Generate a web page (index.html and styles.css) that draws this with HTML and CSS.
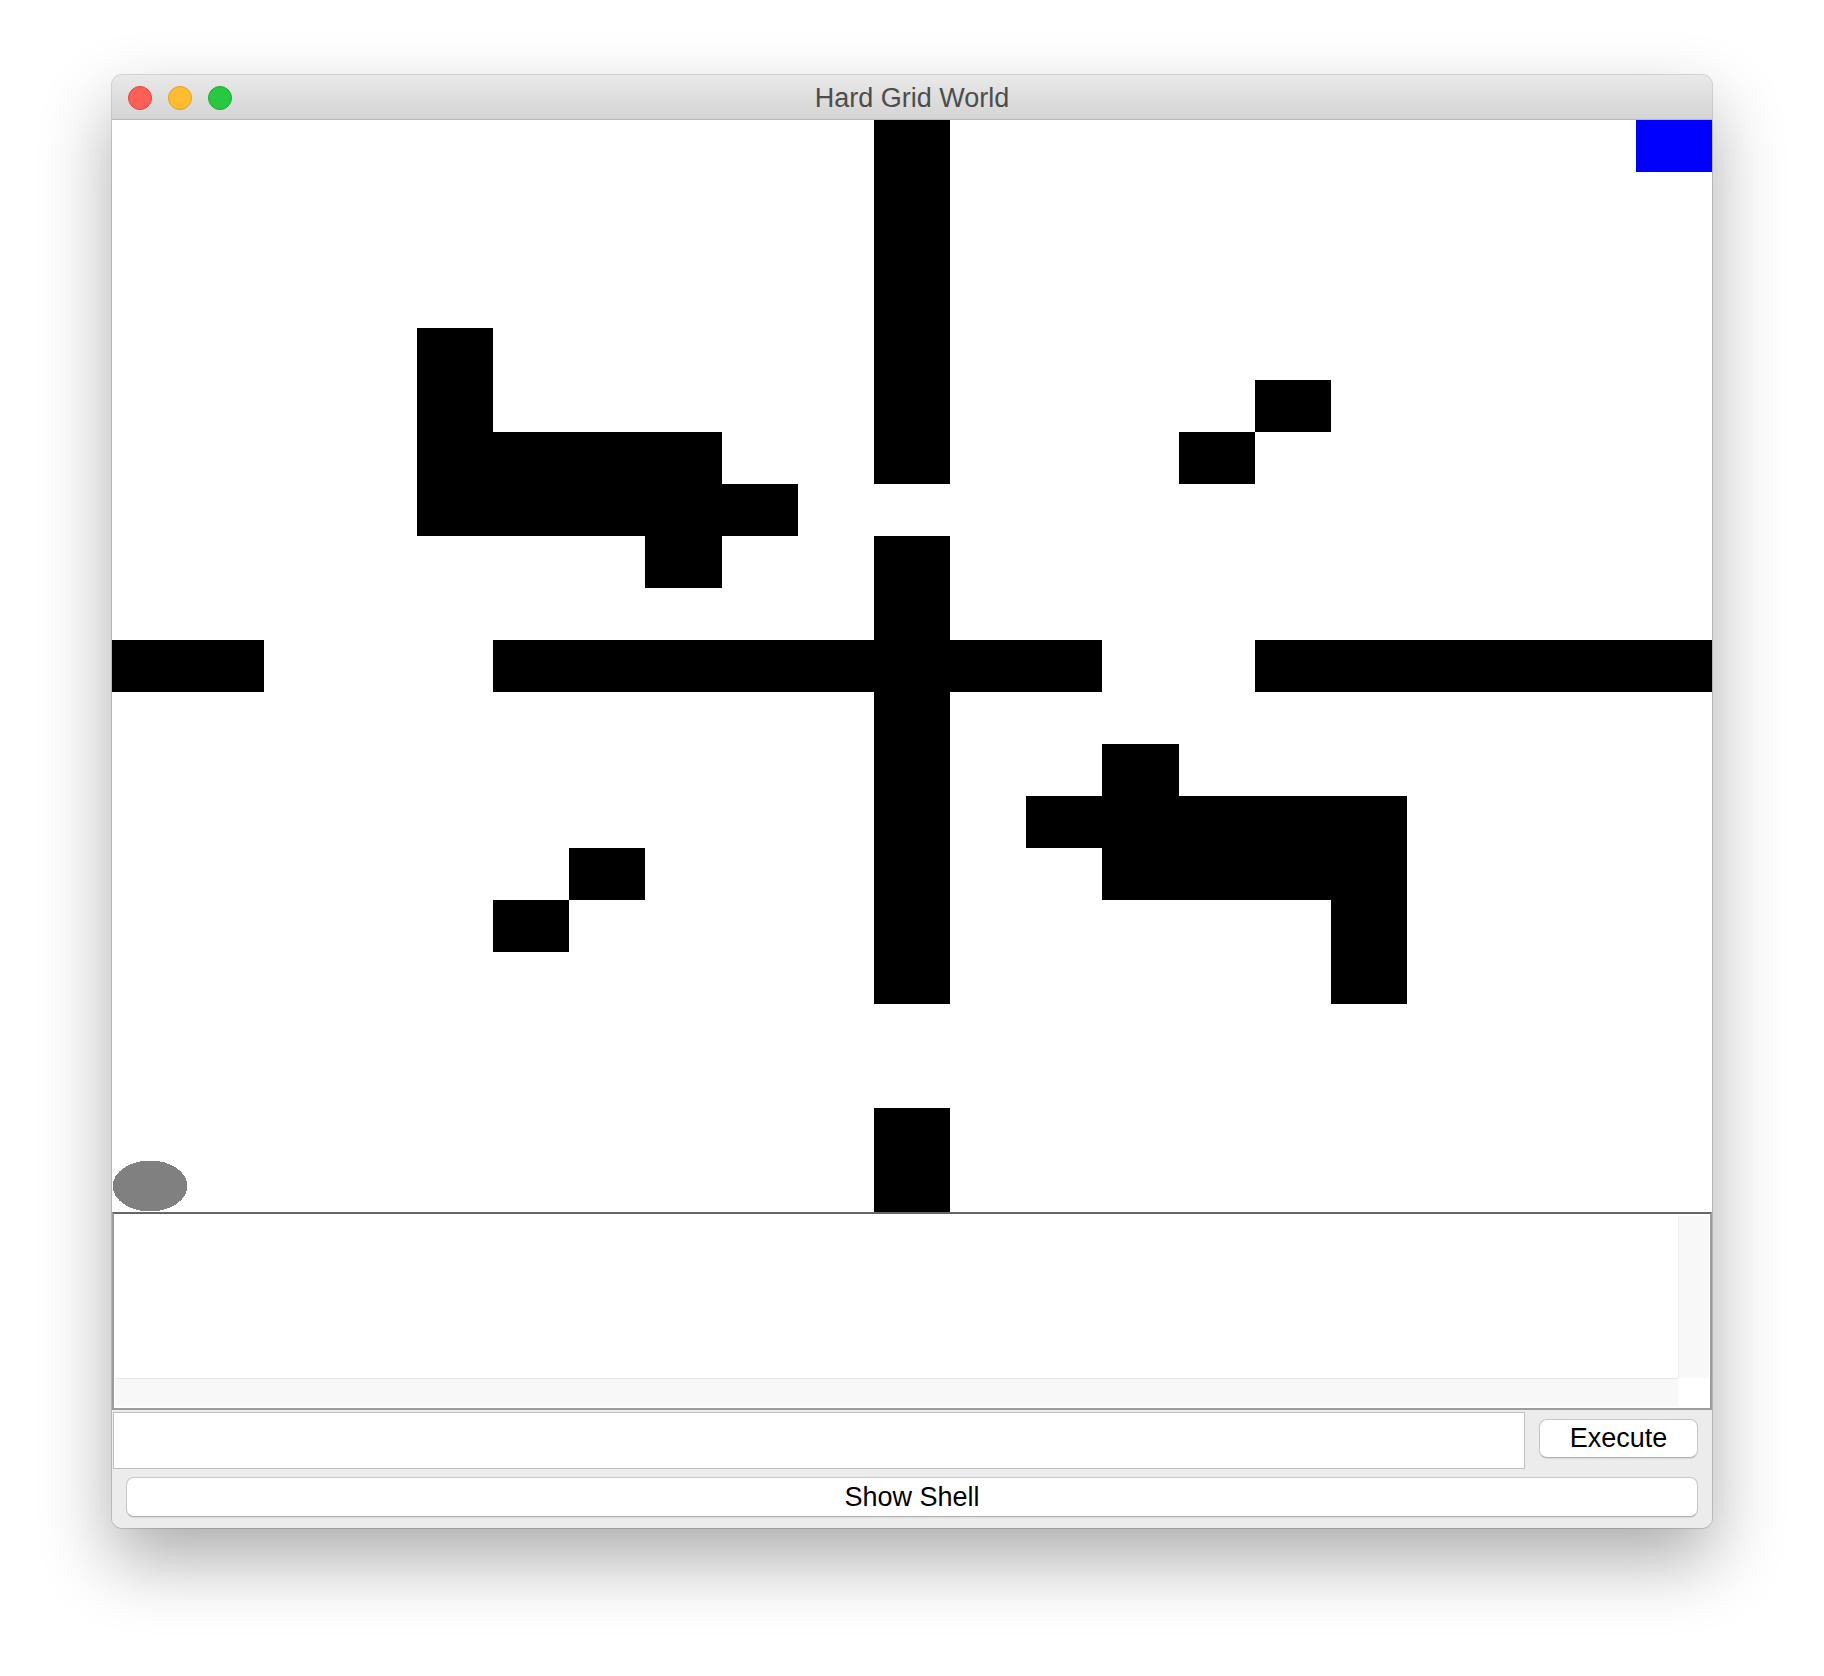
FILE: index.html
```html
<!DOCTYPE html>
<html lang="en">
<head>
<meta charset="utf-8">
<title>Hard Grid World</title>
<link rel="stylesheet" href="styles.css">
</head>
<body>
<div class="window">
  <div class="titlebar">
    <div class="lights">
      <span class="light red"></span>
      <span class="light yellow"></span>
      <span class="light green"></span>
    </div>
    <div class="title">Hard Grid World</div>
  </div>
  <svg class="grid" viewBox="0 0 21 21" preserveAspectRatio="none" shape-rendering="crispEdges">
    <g fill="#000">
      <rect x="10" y="0" width="1" height="7"/>
      <rect x="10" y="8" width="1" height="9"/>
      <rect x="10" y="19" width="1" height="2"/>
      <rect x="0" y="10" width="2" height="1"/>
      <rect x="5" y="10" width="8" height="1"/>
      <rect x="15" y="10" width="6" height="1"/>
      <rect x="4" y="4" width="1" height="4"/>
      <rect x="5" y="6" width="3" height="2"/>
      <rect x="8" y="7" width="1" height="1"/>
      <rect x="7" y="8" width="1" height="1"/>
      <rect x="15" y="5" width="1" height="1"/>
      <rect x="14" y="6" width="1" height="1"/>
      <rect x="6" y="14" width="1" height="1"/>
      <rect x="5" y="15" width="1" height="1"/>
      <rect x="13" y="12" width="1" height="1"/>
      <rect x="12" y="13" width="5" height="1"/>
      <rect x="13" y="14" width="4" height="1"/>
      <rect x="16" y="15" width="1" height="2"/>
    </g>
    <rect x="20" y="0" width="1" height="1" fill="#0000ff"/>
    <ellipse cx="0.5" cy="20.5" rx="0.49" ry="0.49" fill="#808080"/>
  </svg>
  <div class="scrollpane">
    <div class="viewport"></div>
    <div class="vtrack"></div>
    <div class="htrack"></div>
    <div class="corner"></div>
  </div>
  <div class="controls">
    <div class="cmdrow">
      <div class="field"></div>
      <button class="btn exec">Execute</button>
    </div>
    <button class="btn shell">Show Shell</button>
  </div>
</div>
</body>
</html>
```

FILE: styles.css
```css
html, body {
  margin: 0;
  padding: 0;
  background: #ffffff;
}

body {
  width: 1824px;
  height: 1676px;
  padding: 75px 112px 0;
  box-sizing: border-box;
  font-family: "Liberation Sans", Arial, sans-serif;
}

.window {
  width: 1600px;
  height: 1453px;
  display: flex;
  flex-direction: column;
  background: #ececec;
  border-radius: 10px;
  overflow: hidden;
  box-shadow: 0 32px 72px rgba(0, 0, 0, 0.33), 0 0 0 1px rgba(0, 0, 0, 0.14);
}

.titlebar {
  height: 44px;
  flex: none;
  display: flex;
  align-items: center;
  position: relative;
  background: linear-gradient(#e9e9e9, #d4d4d4);
  border-bottom: 1px solid #b9b9b9;
}

.lights {
  display: flex;
  gap: 16px;
  padding-left: 16px;
  padding-top: 1px;
}

.light {
  width: 24px;
  height: 24px;
  border-radius: 50%;
  box-sizing: border-box;
  display: block;
}

.red { background: #fe5f57; border: 1px solid #e0443e; }
.yellow { background: #febc2e; border: 1px solid #dea123; }
.green { background: #28c840; border: 1px solid #1aab29; }

.title {
  position: absolute;
  left: 0;
  right: 0;
  top: 2px;
  bottom: 0;
  display: flex;
  align-items: center;
  justify-content: center;
  font-size: 27px;
  color: #4d4d4d;
}

.grid {
  display: block;
  width: 1600px;
  height: 1092px;
  flex: none;
  background: #ffffff;
}

.scrollpane {
  flex: none;
  height: 198px;
  box-sizing: border-box;
  border: 2px solid #9c9c9c;
  border-top-color: #666666;
  padding: 2px;
  background: #ffffff;
  display: grid;
  grid-template-columns: 1fr 30px;
  grid-template-rows: 162px 28px;
}

.viewport { background: #ffffff; }

.vtrack {
  background: #f8f8f8;
  border-left: 1px solid #ececec;
}

.htrack {
  background: #f8f8f8;
  border-top: 1px solid #e8e8e8;
}

.corner { background: #ffffff; }

.controls {
  flex: 1;
  display: flex;
  flex-direction: column;
  padding: 2px 14px 0 1px;
  gap: 8px;
  background: #ececec;
}

.cmdrow {
  display: flex;
  align-items: flex-start;
  gap: 14px;
}

.field {
  width: 1412px;
  height: 57px;
  box-sizing: border-box;
  background: #ffffff;
  border: 1px solid #bdbdbd;
}

.btn {
  font-family: "Liberation Sans", Arial, sans-serif;
  font-size: 27px;
  color: #000000;
  background: #ffffff;
  border: 1px solid #c8c8c8;
  border-bottom-color: #b0b0b0;
  border-radius: 8px;
  box-shadow: 0 1px 1px rgba(0, 0, 0, 0.08);
  height: 39px;
  padding: 0;
  line-height: 37px;
  box-sizing: border-box;
}

.exec {
  width: 159px;
  margin-top: 7px;
}

.shell {
  margin-left: 13px;
  height: 40px;
  width: 1572px;
}
```
